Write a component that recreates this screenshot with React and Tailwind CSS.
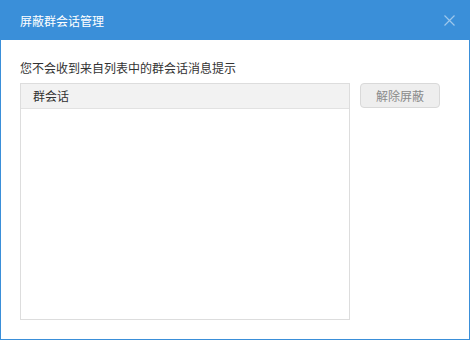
export default function App() {
  const font = { fontFamily: '"Microsoft YaHei", "Noto Sans CJK SC", "Noto Sans", sans-serif' };
  return (
    <div style={font} className="w-[470px] h-[340px] border border-[#3a8fd9] bg-white flex flex-col">
      <div className="h-[39px] bg-[#3a8fd9] flex items-center justify-between pl-[19px] pr-[14px] shrink-0">
        <span className="text-[12px] text-white leading-none mt-[1px]">屏蔽群会话管理</span>
        <svg width="11" height="11" viewBox="0 0 11 11" className="text-white/50">
          <path d="M0.5 0.5 L10.5 10.5 M10.5 0.5 L0.5 10.5" stroke="currentColor" strokeWidth="1.2" />
        </svg>
      </div>
      <div className="pl-[19px] pt-[20px] flex flex-col">
        <div className="text-[12px] leading-[16px] text-[#333]">您不会收到来自列表中的群会话消息提示</div>
        <div className="flex mt-[7px]">
          <div className="w-[330px] h-[237px] border border-[#dddddd] flex flex-col">
            <div className="h-[25px] bg-[#f2f2f2] border-b border-[#e2e2e2] flex items-center pl-[12px] text-[12px] text-[#333]">
              群会话
            </div>
          </div>
          <button className="ml-[10px] w-[80px] h-[25px] rounded-[4px] border border-[#d9d9d9] bg-[#eeeeee] text-[12px] text-[#8a8a8a] flex items-center justify-center">
            解除屏蔽
          </button>
        </div>
      </div>
    </div>
  );
}
